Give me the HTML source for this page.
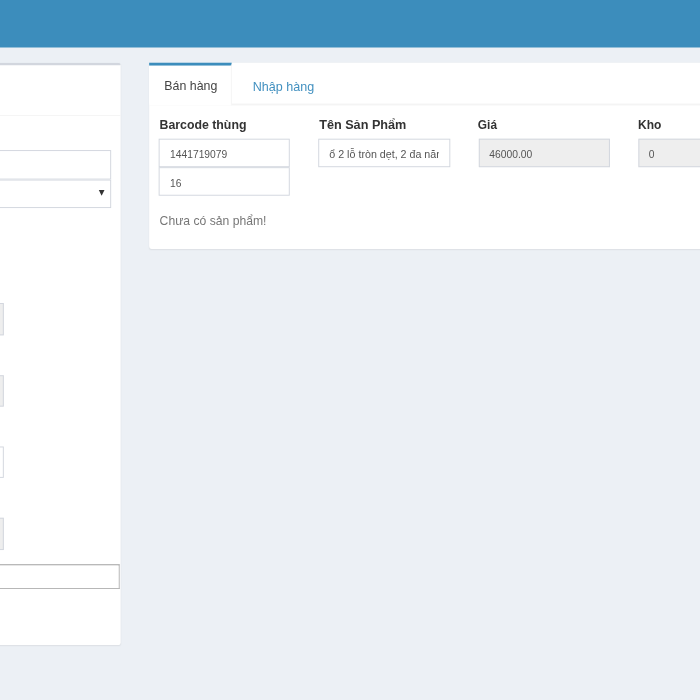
<!DOCTYPE html>
<html><head><meta charset="utf-8"><title>POS</title>
<style>
html,body{margin:0;padding:0;}
body{width:700px;height:700px;overflow:hidden;background:#ecf0f5;font-family:"Liberation Sans",sans-serif;}
#s{position:absolute;left:0;top:0;width:736.842px;height:736.842px;transform:scale(0.95);transform-origin:0 0;}
#s div,#s span{position:absolute;}
.t{white-space:nowrap;transform-origin:0 50%;display:block;}
</style></head><body><div id="s">
<div style="left:0.0px;top:0.0px;width:736.842px;height:50.211px;background:#3c8dbc"></div>
<div style="left:-21.053px;top:65.895px;width:147.579px;height:613.579px;background:#fff;border-radius:3px;box-shadow:0 1px 1.5px rgba(0,0,0,.07);border-top:3px solid #d2d6de;box-sizing:border-box"></div>
<div style="left:-21.053px;top:120.947px;width:147.579px;height:1.053px;background:#f4f4f4"></div>
<div style="left:-21.053px;top:158.316px;width:137.684px;height:30.526px;box-sizing:border-box;border:1px solid #d2d6de;background:#fff"></div>
<div style="left:-21.053px;top:188.632px;width:137.684px;height:30.316px;box-sizing:border-box;border:1px solid #d2d6de;background:#fff"></div>
<div style="left:104.0px;top:200.421px;width:0;height:0;border-left:3.0px solid transparent;border-right:3.0px solid transparent;border-top:6.0px solid #333"></div>
<div style="left:-21.053px;top:319.263px;width:24.947px;height:34.0px;box-sizing:border-box;border:1px solid #d2d6de;background:#eee"></div>
<div style="left:-21.053px;top:394.526px;width:24.947px;height:33.789px;box-sizing:border-box;border:1px solid #d2d6de;background:#eee"></div>
<div style="left:-21.053px;top:469.789px;width:24.947px;height:33.684px;box-sizing:border-box;border:1px solid #d2d6de;background:#fff"></div>
<div style="left:-21.053px;top:544.526px;width:24.947px;height:34.0px;box-sizing:border-box;border:1px solid #d2d6de;background:#eee"></div>
<div style="left:-21.053px;top:593.684px;width:146.947px;height:26.211px;box-sizing:border-box;background:#fff;border:1px solid #b4b4b4;border-top-color:#9c9c9c;border-left-color:#9c9c9c"></div>
<div style="left:156.842px;top:65.684px;width:601.053px;height:196.421px;background:#fff;border-radius:3px;box-shadow:0 1px 1.5px rgba(0,0,0,.07)"></div>
<div style="left:156.842px;top:109.474px;width:601.053px;height:1.053px;background:#f4f4f4"></div>
<div style="left:156.842px;top:65.684px;width:87.263px;height:45.053px;background:#fff;box-sizing:border-box;border-top:3.37px solid #3c8dbc;border-right:1px solid #f4f4f4"></div>
<span class="t" style="left:173.263px;top:83.546px;font-size:12.947px;line-height:14.877px;color:#444;font-weight:400;transform:scaleX(1.008);">Bán hàng</span>
<span class="t" style="left:266.316px;top:85.125px;font-size:12.947px;line-height:14.877px;color:#4391c0;font-weight:400;transform:scaleX(1.022);">Nhập hàng</span>
<span class="t" style="left:168.211px;top:124.832px;font-size:12.632px;line-height:14.514px;color:#333;font-weight:700;transform:scaleX(1.026);">Barcode thùng</span>
<span class="t" style="left:335.789px;top:124.832px;font-size:12.632px;line-height:14.514px;color:#333;font-weight:700;transform:scaleX(1.054);">Tên Sản Phẩm</span>
<span class="t" style="left:503.474px;top:124.832px;font-size:12.632px;line-height:14.514px;color:#333;font-weight:700;transform:scaleX(0.99);">Giá</span>
<span class="t" style="left:671.579px;top:124.832px;font-size:12.632px;line-height:14.514px;color:#333;font-weight:700;transform:scaleX(1.0);">Kho</span>
<div style="left:167.263px;top:145.895px;width:137.579px;height:30.526px;box-sizing:border-box;border:1px solid #d2d6de;background:#fff"></div>
<div style="left:167.263px;top:176.105px;width:137.579px;height:30.0px;box-sizing:border-box;border:1px solid #d2d6de;background:#fff"></div>
<div style="left:335.368px;top:145.684px;width:138.421px;height:30.737px;box-sizing:border-box;border:1px solid #d2d6de;background:#fff"></div>
<div style="left:503.579px;top:145.895px;width:138.211px;height:30.316px;box-sizing:border-box;border:1px solid #d2d6de;background:#eee"></div>
<div style="left:671.684px;top:145.895px;width:137.158px;height:30.316px;box-sizing:border-box;border:1px solid #d2d6de;background:#eee"></div>
<span class="t" style="left:178.737px;top:156.017px;font-size:11.263px;line-height:12.941px;color:#555;font-weight:400;transform:scaleX(0.962);">1441719079</span>
<span class="t" style="left:178.737px;top:186.965px;font-size:11.263px;line-height:12.941px;color:#555;font-weight:400;transform:scaleX(0.962);">16</span>
<div style="left:337.158px;top:146.947px;width:124.842px;height:27.895px;overflow:hidden"><span class="t" style="left:9.474px;top:9.07px;font-size:11.263px;line-height:12.941px;color:#555;transform:scaleX(1.0)">ổ 2 lỗ tròn dẹt, 2 đa năng</span></div>
<span class="t" style="left:514.737px;top:156.017px;font-size:11.263px;line-height:12.941px;color:#555;font-weight:400;transform:scaleX(0.964);">46000.00</span>
<span class="t" style="left:682.737px;top:156.017px;font-size:11.263px;line-height:12.941px;color:#555;font-weight:400;transform:scaleX(0.962);">0</span>
<span class="t" style="left:167.579px;top:226.388px;font-size:12.947px;line-height:14.877px;color:#777;font-weight:400;transform:scaleX(0.99);">Chưa có sản phẩm!</span>
</div></body></html>
